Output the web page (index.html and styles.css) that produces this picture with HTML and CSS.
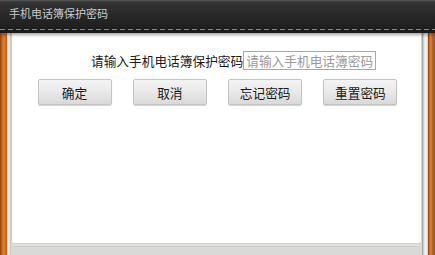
FILE: index.html
```html
<!DOCTYPE html>
<html>
<head>
<meta charset="utf-8">
<link rel="stylesheet" href="styles.css">
</head>
<body>
<div class="window">
  <div class="titlebar">
    <span class="title">手机电话簿保护密码</span>
    <div class="stitch"></div>
  </div>
  <div class="frame">
    <div class="wood wood-left"></div>
    <div class="inner">
      <div class="rail rail-left"></div>
      <div class="panel-wrap">
        <div class="panel">
          <div class="prompt-row">
            <span class="prompt">请输入手机电话簿保护密码</span>
            <input class="pwd" type="text" placeholder="请输入手机电话簿密码">
          </div>
          <div class="buttons">
            <button class="btn">确定</button>
            <button class="btn">取消</button>
            <button class="btn">忘记密码</button>
            <button class="btn">重置密码</button>
          </div>
        </div>
        <div class="ledge"></div>
      </div>
      <div class="rail rail-right"></div>
    </div>
    <div class="wood wood-right"></div>
    <div class="edge"></div>
  </div>
</div>
</body>
</html>
```

FILE: styles.css
```css
html, body {
  margin: 0;
  padding: 0;
  width: 435px;
  height: 255px;
  overflow: hidden;
  background: #d9d9d7;
  font-family: "Noto Sans CJK SC", "Noto Sans", sans-serif;
}

.window {
  display: flex;
  flex-direction: column;
  width: 435px;
  height: 255px;
}

.titlebar {
  position: relative;
  height: 33px;
  flex: none;
  background: linear-gradient(to bottom, #5a5a5a 0px, #353535 2px, #2b2b2b 12px, #202020 26px, #1a1a1a 33px);
  box-shadow: 0 2px 3px rgba(0,0,0,0.35);
  z-index: 2;
}

.title {
  display: block;
  padding: 6px 0 0 9px;
  font-size: 11px;
  line-height: 15px;
  color: #c9c9c9;
}

.stitch {
  position: absolute;
  left: 0;
  right: 0;
  top: 29px;
  height: 1px;
  background: repeating-linear-gradient(to right, #8a8a8a 0 5px, transparent 5px 8px);
}

.frame {
  flex: 1;
  display: flex;
  min-height: 0;
}

.wood {
  flex: none;
  background: linear-gradient(to right, #8a3f0c 0, #c4621a 25%, #e0842c 55%, #b8581a 100%);
}
.wood-left { width: 7px; }
.wood-right { width: 5px; }
.edge { width: 2px; flex: none; background: #6b6b6b; }

.inner {
  flex: 1;
  display: flex;
  background: #d9d9d7;
}

.rail {
  flex: none;
  background: linear-gradient(to right, #e9e9e9, #bdbdbd);
}
.rail-left { width: 4px; background: linear-gradient(to right, #d8d8d8, #f3f3f3 50%, #b8b8b8); }
.rail-right { width: 6px; background: linear-gradient(to right, #9e9e9e, #e6e6e6 40%, #f5f5f5 70%, #c9c9c9); }

.panel-wrap {
  flex: 1;
  display: flex;
  flex-direction: column;
  padding-bottom: 8px;
}

.panel {
  flex: 1;
  background: #ffffff;
  border-left: 1px solid #cfcfcf;
  border-right: 1px solid #cfcfcf;
  border-radius: 0 0 3px 3px;
  padding-top: 18px;
  box-sizing: border-box;
}

.ledge {
  height: 4px;
  flex: none;
  margin: 0 2px;
  background: linear-gradient(to bottom, #c8c8c4, #e8e8e4 50%, #c4c4c0);
  border-radius: 0 0 3px 3px;
}

.prompt-row {
  display: flex;
  align-items: center;
  padding-left: 79px;
  height: 19px;
}

.prompt {
  font-size: 12.7px;
  color: #1a1a1a;
  line-height: 19px;
  white-space: nowrap;
}

.pwd {
  width: 133px;
  height: 19px;
  box-sizing: border-box;
  margin: 0;
  padding: 0 2px;
  border: 1px solid #a8a8a8;
  font-family: "Noto Sans CJK SC", "Noto Sans", sans-serif;
  font-size: 12.7px;
  color: #222;
  outline: none;
}
.pwd::placeholder { color: #9a9a9a; }

.buttons {
  display: grid;
  grid-template-columns: repeat(4, 95.3px);
  justify-content: center;
  justify-items: center;
  margin-top: 9px;
  padding-left: 2px;
}

.btn {
  width: 74px;
  height: 26px;
  margin: 0;
  padding: 0;
  border: 1px solid #c4c4c4;
  border-radius: 2px;
  background: linear-gradient(to bottom, #f4f4f4 0%, #e9e9e9 50%, #d9d9d9 100%);
  box-shadow: 0 1px 1px rgba(0,0,0,0.18);
  font-family: "Noto Sans CJK SC", "Noto Sans", sans-serif;
  font-size: 12.7px;
  color: #1a1a1a;
}
```
